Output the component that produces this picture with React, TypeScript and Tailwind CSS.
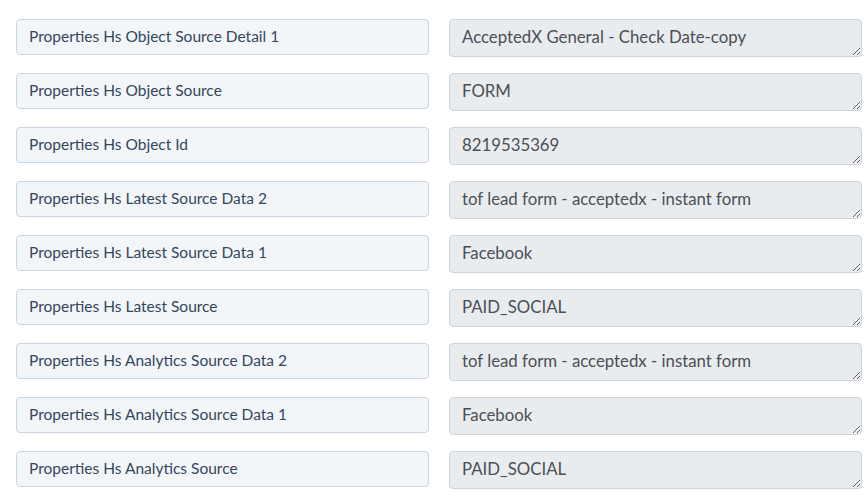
const rows: [string, string][] = [
  ["Properties Hs Object Source Detail 1", "AcceptedX General - Check Date-copy"],
  ["Properties Hs Object Source", "FORM"],
  ["Properties Hs Object Id", "8219535369"],
  ["Properties Hs Latest Source Data 2", "tof lead form - acceptedx - instant form"],
  ["Properties Hs Latest Source Data 1", "Facebook"],
  ["Properties Hs Latest Source", "PAID_SOCIAL"],
  ["Properties Hs Analytics Source Data 2", "tof lead form - acceptedx - instant form"],
  ["Properties Hs Analytics Source Data 1", "Facebook"],
  ["Properties Hs Analytics Source", "PAID_SOCIAL"],
];

export default function App() {
  return (
    <div
      className="min-h-[500px] bg-white pl-[16px] pr-[5px] pt-[19px]"
      style={{ fontFamily: "Lato, 'Open Sans', sans-serif" }}
    >
      <div className="flex flex-col gap-[16px]">
        {rows.map(([label, value]) => (
          <div key={label} className="grid grid-cols-[413px_413px] items-start gap-[20px]">
            <div className="flex h-[36px] items-center rounded-[4px] border border-[#cbd6e2] bg-[#f3f6f9] px-[12px] text-[15.5px] text-[#33475b]">
              {label}
            </div>
            <textarea
              readOnly
              rows={1}
              value={value}
              className="block h-[38px] w-full resize-y rounded-[4px] border border-[#ced4da] bg-[#e9ecef] px-[12px] pt-[5px] pb-[7px] text-[16.8px] leading-[24px] text-[#495057] outline-none"
            />
          </div>
        ))}
      </div>
    </div>
  );
}
